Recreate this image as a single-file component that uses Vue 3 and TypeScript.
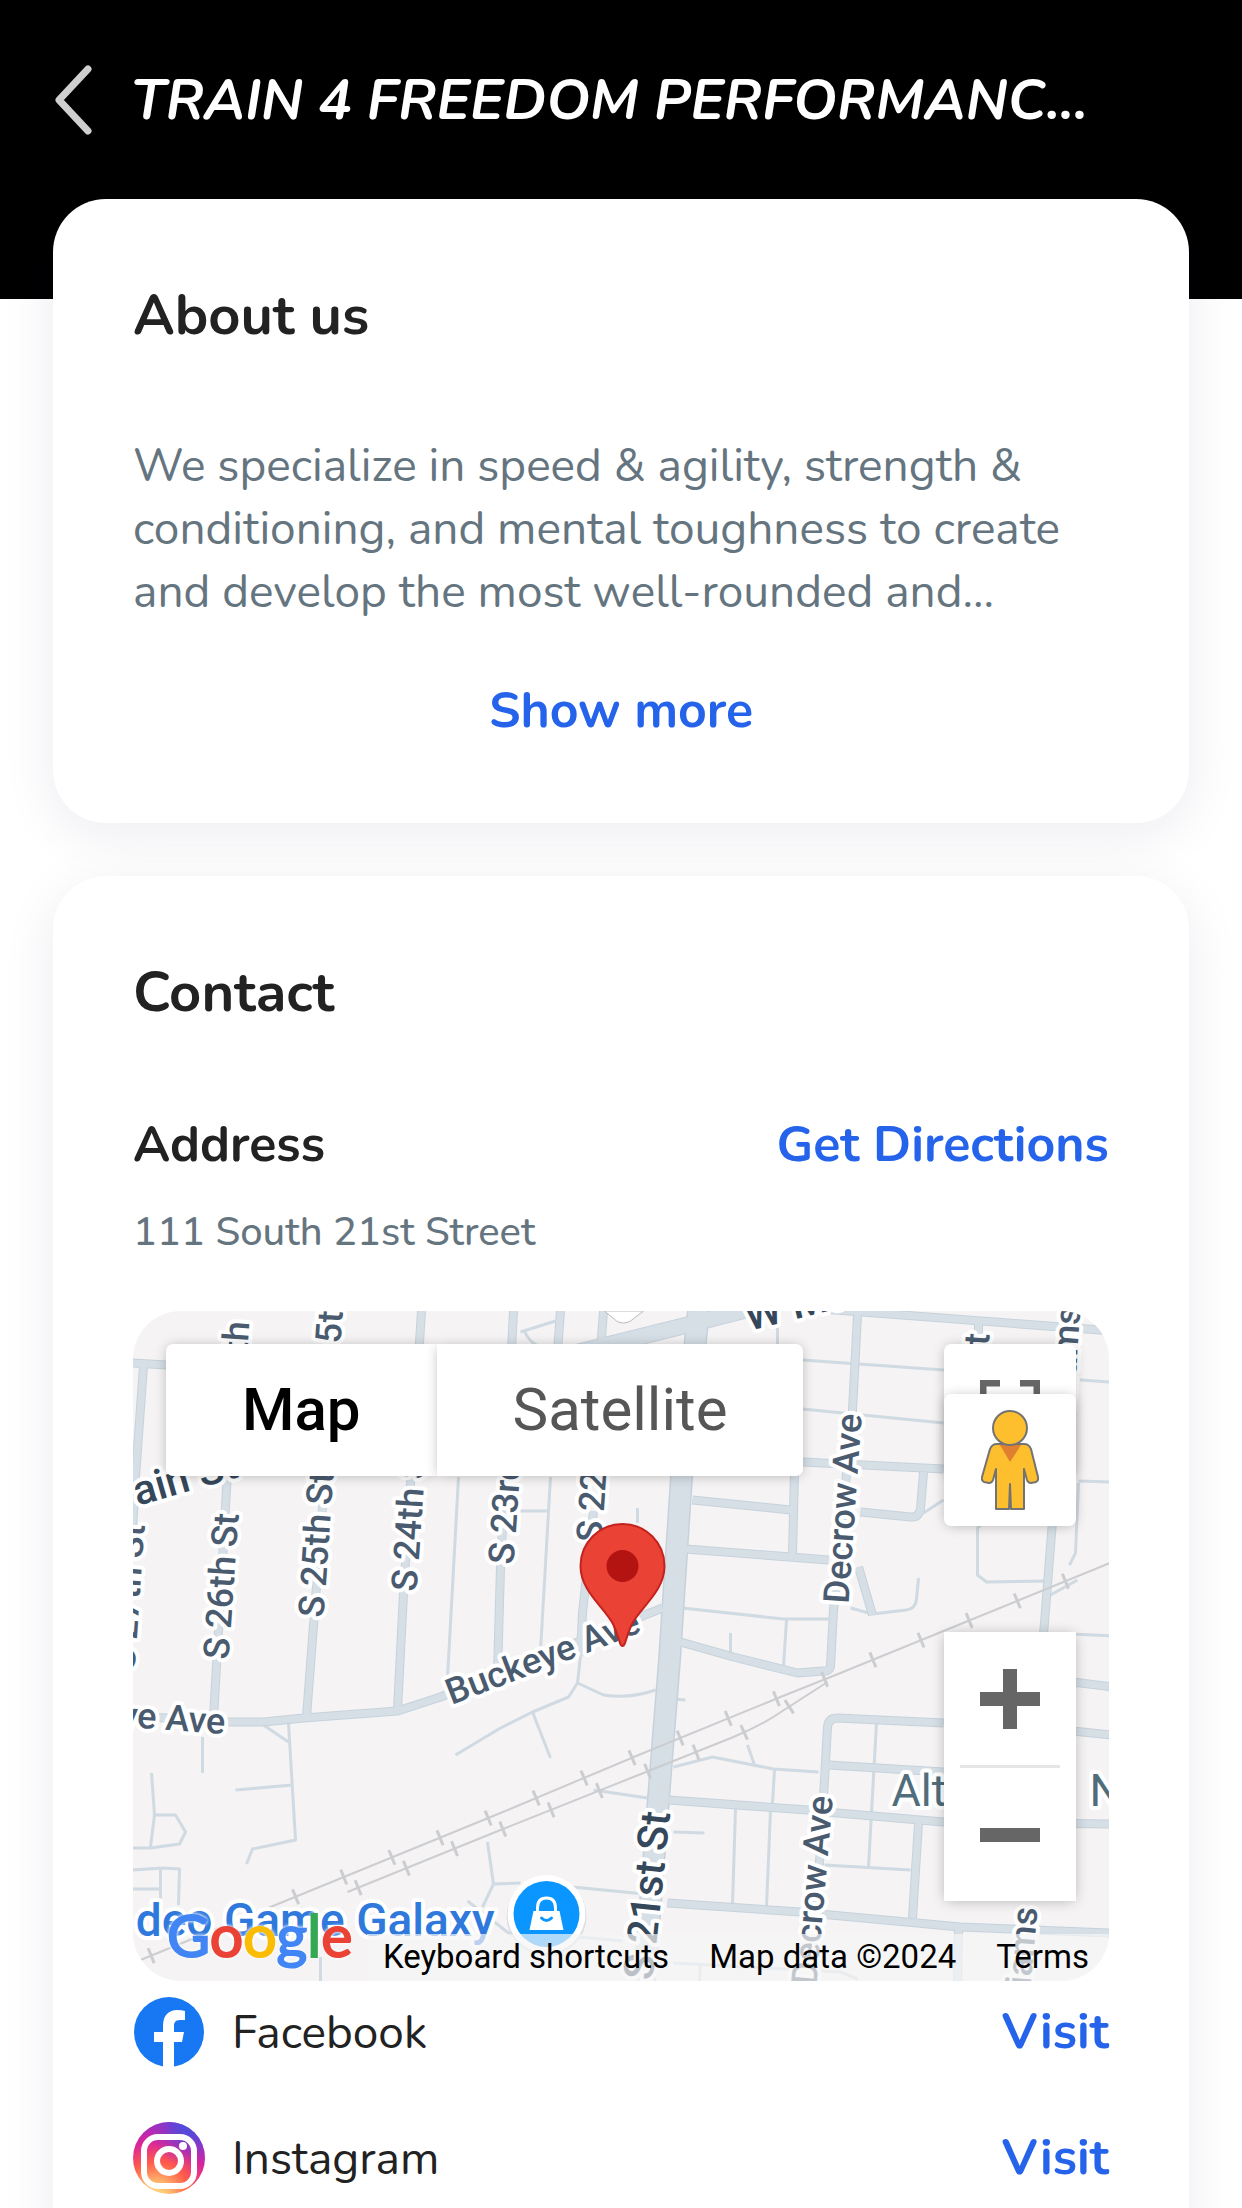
<script setup lang="ts">
interface Label {
  text: string
  x: number
  y: number
  rotate: number
  kind: 'street' | 'main' | 'area' | 'place'
  anchor?: 'start' | 'end'
}

const title = 'TRAIN 4 FREEDOM PERFORMANC...'

const wideRoads: string[] = [
  'M0 52L34 54', 'M11 55L3 166L0 220', 'M99 90L81 407', 'M203 0L192 170L174 406',
  'M289 0L271 282L265 399', 'M381 0L368 256L365 362', 'M428 0L425 40',
  'M471 0L468 40', 'M461 200L450 302L448 345', 'M0 405L98 411L131 411L171 407L265 400L308 386L515 303L530 297',
  'M536 489L675 499L705 502L811 511L978 513', 'M535 592L668 601L698 604L828 616L978 622',
  'M670 151L811 158', 'M690 -2L968 19L980 21', 'M725 4L720 99L701 299L698 355Q697 361 690 360L665 362L601 346L548 331',
  'M560 189L658 199', 'M662 160L660 244', 'M553 238L696 249', 'M791 161L788 198Q786 207 778 206L728 201',
  'M920 210L911 324', 'M726 256L740 304', 'M846 12L846 24', 'M940 371L980 376', 'M940 420L980 424',
  'M811 412L705 407Q696 407 695 416L691 486L684 600', 'M696 454L811 461', 'M786 512L780 607', 'M826 619L825 672',
]

const thinRoads: string[] = [
  'M326 166L316 349L315 366', 'M418 166L408 340', 'M388 200L415 200', 'M388 21L423 10', 'M392 20Q396 30 404 34',
  'M448 345L445 372L436 386L400 401L368 417L323 444', 'M400 401L418 447', 'M445 372L471 384Q498 388 523 379',
  'M505 197L505 212', 'M131 414L156 431', 'M156 412L163 529L120 538L114 553', 'M103 479L160 474', 'M70 426L70 462',
  'M19 462L22 504L18 536', 'M22 504L43 504L53 521L47 533L18 537L0 537', 'M0 559L30 557L47 558L46 594', 'M28 557L28 589',
  'M0 578L28 578', 'M355 531L361 573L388 572M440 576L512 583', 'M361 573L350 596M335 590L380 625', 'M461 479L515 487',
  'M541 456L580 446L641 458L686 461', 'M615 434L622 454', 'M642 459L640 492', 'M603 497L600 594', 'M638 499L634 596',
  'M541 521L572 522', 'M541 388L553 389', 'M670 49L811 59L978 71', 'M670 98L811 112', 'M645 15L645 34', 'M946 170L978 171',
  'M550 297L651 308L696 308', 'M654 309L651 356', 'M598 322L598 344', 'M791 202L811 189', 'M853 210L845 217L845 264L854 271L915 270',
  'M946 172L943 242L937 254', 'M718 297L740 303L774 299Q783 298 784 288L786 267', 'M918 284L945 269', 'M940 323L980 325',
  'M744 412L736 556', 'M692 554L778 559', 'M446 626L490 630M541 652L708 661L725 668', 'M188 646L188 670M568 655L567 670',
]

const rails: string[] = [
  'M8 649L138 596L368 502L511 442L648 386L708 362L980 251',
  'M215 581L368 519L511 462L601 426Q630 414 650 400L695 371',
]

const labels: Label[] = [
  { text: 'S 26th St', x: 96, y: 349, rotate: -86, kind: 'street' },
  { text: 'S 26th', x: 117, y: 11, rotate: -86, kind: 'street', anchor: 'end' },
  { text: 'S 25th St', x: 191, y: 307, rotate: -86, kind: 'street' },
  { text: '5th', x: 208, y: 33, rotate: -86, kind: 'street' },
  { text: 'S 24th St', x: 284, y: 281, rotate: -86, kind: 'street' },
  { text: 'S 23rd St', x: 381, y: 254, rotate: -86, kind: 'street' },
  { text: 'S 22nd St', x: 469, y: 232, rotate: -86, kind: 'street' },
  { text: 'S 27th St', x: 2, y: 360, rotate: -86, kind: 'street' },
  { text: 'Decrow Ave', x: 716, y: 293, rotate: -86, kind: 'street' },
  { text: 'Decrow Ave', x: 684, y: 675, rotate: -85, kind: 'street' },
  { text: 'Buckeye Ave', x: 319, y: 394, rotate: -21, kind: 'street' },
  { text: 'eye Ave', x: 92, y: 423, rotate: 4, kind: 'street', anchor: 'end' },
  { text: 'St', x: 857, y: 23, rotate: -86, kind: 'street', anchor: 'end' },
  { text: 'Williams', x: 948, y: -4, rotate: -86, kind: 'street', anchor: 'end' },
  { text: 'Williams', x: 905, y: 597, rotate: -85, kind: 'street', anchor: 'end' },
  { text: 'ain St', x: 5, y: 195, rotate: -16, kind: 'main' },
  { text: 'W Main St', x: 616, y: 20, rotate: -14, kind: 'main' },
  { text: 'S 21st St', x: 520, y: 670, rotate: -84, kind: 'main' },
  { text: 'Alt', x: 759, y: 495, rotate: 0, kind: 'area' },
  { text: 'N', x: 957, y: 495, rotate: 0, kind: 'area' },
  { text: 'deo Game Galaxy', x: 362, y: 625, rotate: 0, kind: 'place', anchor: 'end' },
]

const logo = [
  { letter: 'G', color: '#4285f4' },
  { letter: 'o', color: '#ea4335' },
  { letter: 'o', color: '#fbbc04' },
  { letter: 'g', color: '#4285f4' },
  { letter: 'l', color: '#34a853' },
  { letter: 'e', color: '#ea4335' },
]
</script>

<template>
  <div class="page">
    <header class="topbar">
      <button class="back" type="button" aria-label="Back">
        <svg viewBox="0 0 40 72" width="40" height="72" fill="none">
          <path d="M35 4L6 35L35 66" stroke="#cfcfcf" stroke-width="7" stroke-linecap="round" stroke-linejoin="round" />
        </svg>
      </button>
      <h1>{{ title }}</h1>
    </header>

    <main class="cards">
      <section class="card">
        <h2>About us</h2>
        <p class="about">
          We specialize in speed &amp; agility, strength &amp;<br />conditioning, and mental toughness to create<br />and
          develop the most well-rounded and...
        </p>
        <button class="action more" type="button">Show more</button>
      </section>

      <section class="card">
        <h2>Contact</h2>
        <div class="address-head">
          <h3>Address</h3>
          <a class="action" href="#directions">Get Directions</a>
        </div>
        <p class="street">111 South 21st Street</p>

        <div class="map">
          <svg class="tiles" viewBox="0 0 977 670" preserveAspectRatio="xMidYMid slice" aria-hidden="true">
            <rect width="977" height="670" fill="#f5f3f4" />
            <g fill="none" stroke-linejoin="round">
              <path v-for="d in thinRoads" :key="d" :d="d" stroke="#d0dae2" stroke-width="3" />
              <g stroke="#c6d2db" stroke-width="9">
                <path v-for="d in wideRoads" :key="d" :d="d" />
                <path d="M430 45L555 14L640 -8" stroke-width="17" />
                <path d="M566 0L549 166L537 349L525 500L512 670" stroke-width="23" />
              </g>
              <g stroke="#d6dfe6" stroke-width="7">
                <path v-for="d in wideRoads" :key="d" :d="d" />
                <path d="M430 45L555 14L640 -8" stroke-width="15" />
                <path d="M566 0L549 166L537 349L525 500L512 670" stroke-width="20" />
              </g>
              <g v-for="d in rails" :key="d" stroke="#cccdd0">
                <path :d="d" stroke-width="2" />
                <path :d="d" stroke-width="16" stroke-dasharray="3 49" stroke-dashoffset="-10" />
              </g>
            </g>
            <text
              v-for="(l, i) in labels"
              :key="i"
              :class="['label', l.kind]"
              :text-anchor="l.anchor ?? 'start'"
              :transform="`translate(${l.x} ${l.y}) rotate(${l.rotate})`"
            >{{ l.text }}</text>
            <circle cx="414" cy="605" r="40" fill="#c9d0d6" opacity=".6" />
            <circle cx="414" cy="603" r="39" fill="#fff" />
            <circle cx="414" cy="603" r="33" fill="#0b96ff" />
            <path d="M401 600h26l4 19h-34z" fill="#fff" />
            <path d="M405 601v-4q0-10 9-10t9 10v4" fill="none" stroke="#fff" stroke-width="3" />
            <path d="M409 607q5 5 10 0" fill="none" stroke="#0b96ff" stroke-width="3" stroke-linecap="round" />
            <path d="M472 0l12 10q7 4 14 0l13-10z" fill="#fff" stroke="#bbb" stroke-width="1" />
            <path
              d="M490 335C487 335 487 327 481 314C473 297 448 281 448 255A42 42 0 0 1 532 255C532 281 507 297 499 314C493 327 493 335 490 335Z"
              fill="#ea4335" stroke="#c5221f" stroke-width="2"
            />
            <circle cx="490" cy="255" r="16" fill="#b31412" />
          </svg>

          <div class="map-type">
            <button class="selected" type="button">Map</button>
            <button type="button">Satellite</button>
          </div>

          <button class="control fullscreen" type="button" aria-label="Toggle fullscreen view">
            <svg viewBox="0 0 60 60" width="60" height="60" fill="none" stroke="#666" stroke-width="7">
              <path d="M3 20V3H20M40 3H57V20M57 40V57H40M20 57H3V40" />
            </svg>
          </button>
          <button class="control pegman" type="button" aria-label="Street View">
            <svg viewBox="0 0 58 102" width="58" height="102" stroke="#737373" stroke-width="2" stroke-linejoin="round">
              <path d="M16 35H43Q48 35 50 40L57 68Q58 71 55 73L50 74Q47 74 46 71L43 60V100H30L29 75L28 100H15V60L12 71Q11 74 8 74L3 73Q0 71 1 68L9 40Q11 35 16 35Z" fill="#fdbf2d" />
              <path d="M19 36H40L29 53Z" fill="#e07f2f" stroke="none" />
              <circle cx="29" cy="19" r="17" fill="#fdbf2d" />
            </svg>
          </button>
          <div class="zoom">
            <button type="button" aria-label="Zoom in">
              <svg viewBox="0 0 60 60" width="60" height="60"><path d="M23 0h14v23h23v14H37v23H23V37H0V23h23z" fill="#666" /></svg>
            </button>
            <hr />
            <button type="button" aria-label="Zoom out">
              <svg viewBox="0 0 60 60" width="60" height="60"><path d="M0 23h60v14H0z" fill="#666" /></svg>
            </button>
          </div>

          <div class="attribution">
            <a href="#shortcuts">Keyboard shortcuts</a>
            <span>Map data ©2024</span>
            <a href="#terms">Terms</a>
          </div>
          <a class="logo" href="#google" aria-label="Google"><span v-for="(g, i) in logo" :key="i" :style="{ color: g.color }">{{ g.letter }}</span></a>
        </div>

        <ul class="links">
          <li>
            <svg viewBox="0 0 72 72" width="72" height="72" aria-hidden="true">
              <circle cx="36" cy="36" r="35" fill="#1877f2" />
              <path d="M30 72V46H21V36H30V30C30 19 36 14 44 14Q49 14 52 15V24H47C42 24 41 27 41 30V36H51L49 46H41V72Z" fill="#fff" />
            </svg>
            <span>Facebook</span>
            <a class="action" href="#facebook">Visit</a>
          </li>
          <li>
            <svg viewBox="0 0 72 72" width="72" height="72" aria-hidden="true">
              <defs>
                <radialGradient id="ig-warm" cx="32%" cy="104%" r="100%">
                  <stop offset="0" stop-color="#ffdd83" />
                  <stop offset=".18" stop-color="#ffc070" />
                  <stop offset=".48" stop-color="#ff5c4a" />
                  <stop offset=".76" stop-color="#dc2598" />
                  <stop offset="1" stop-color="#a22dc0" />
                </radialGradient>
                <radialGradient id="ig-cool" cx="80%" cy="0%" r="62%">
                  <stop offset="0" stop-color="#4255e0" />
                  <stop offset=".4" stop-color="#5a46d8" stop-opacity=".85" />
                  <stop offset="1" stop-color="#a22dc0" stop-opacity="0" />
                </radialGradient>
              </defs>
              <circle cx="36" cy="36" r="36" fill="url(#ig-warm)" />
              <circle cx="36" cy="36" r="36" fill="url(#ig-cool)" />
              <g fill="none" stroke="#fff" stroke-width="6">
                <rect x="11" y="15" width="50" height="49" rx="14" />
                <circle cx="36" cy="39" r="12" />
              </g>
              <circle cx="50" cy="24" r="4" fill="#fff" />
            </svg>
            <span>Instagram</span>
            <a class="action" href="#instagram">Visit</a>
          </li>
        </ul>
      </section>
    </main>
  </div>
</template>

<style>
body {
  margin: 0;
  background: #fff;
}
</style>

<style scoped>
.page {
  min-height: 100vh;
  box-sizing: border-box;
  color: #222;
  font-family: Nunito, Lato, sans-serif;
  font-size: 46px;
}

h1,
h2,
h3,
p,
ul {
  margin: 0;
  padding: 0;
}

button {
  border: 0;
  padding: 0;
  background: none;
  font: inherit;
  cursor: pointer;
}

a {
  color: inherit;
  text-decoration: none;
}

svg {
  display: block;
}

.topbar {
  display: flex;
  align-items: center;
  gap: 38px;
  padding: 0 53px 97px;
  height: 202px;
  background: #000;
  color: #fff;
}

.topbar h1 {
  font-size: 56px;
  line-height: 76px;
  font-weight: 700;
  font-style: italic;
  white-space: nowrap;
}

.cards {
  display: flex;
  flex-direction: column;
  gap: 53px;
  margin: -100px 53px 0;
}

.card {
  padding: 79px 80px 78px;
  border-radius: 53px;
  background: #fff;
  box-shadow: 0 12px 54px rgba(20, 20, 90, 0.08);
}

h2 {
  margin-bottom: 80px;
  font-size: 56px;
  line-height: 76px;
  font-weight: 700;
}

h3 {
  font-size: 50px;
  line-height: 68px;
  font-weight: 700;
}

.about {
  margin-bottom: 54px;
  color: #65757f;
  line-height: 63px;
}

.action {
  color: #2563eb;
  font-size: 50px;
  line-height: 68px;
  font-weight: 700;
}

.more {
  display: block;
  margin: 0 auto;
}

.address-head {
  display: flex;
  justify-content: space-between;
}

.street {
  margin: 26px 0 52px;
  color: #65757f;
  font-size: 40px;
  line-height: 54px;
  font-weight: 500;
}

.map {
  position: relative;
  height: 670px;
  overflow: hidden;
  border-radius: 48px;
  font-family: Roboto, sans-serif;
}

.tiles {
  width: 100%;
  height: 100%;
}

.label {
  font-size: 36px;
  font-weight: 500;
  fill: #4a5b70;
  stroke: #fff;
  stroke-width: 8px;
  stroke-linejoin: round;
  paint-order: stroke;
}

.label.main {
  font-size: 42px;
  fill: #35475a;
}

.label.area {
  font-size: 45px;
  font-weight: 400;
  fill: #4f6d7b;
}

.label.place {
  font-size: 46px;
  fill: #2f78dc;
}

.map-type {
  position: absolute;
  top: 33px;
  left: 33px;
  display: flex;
  height: 132px;
}

.map-type button,
.control,
.zoom {
  background: #fff;
  box-shadow: 0 1px 13px -2px rgba(0, 0, 0, 0.3);
}

.map-type button {
  padding: 0 76px;
  color: #565656;
  font-size: 60px;
  line-height: 130px;
}

.map-type .selected {
  border-radius: 7px 0 0 7px;
  color: #000;
  font-weight: 500;
}

.map-type button:last-child {
  border-radius: 0 7px 7px 0;
}

.control {
  position: absolute;
  right: 33px;
  display: grid;
  place-items: center;
  width: 132px;
  height: 132px;
  border-radius: 7px;
}

.fullscreen {
  top: 33px;
}

.pegman {
  top: 83px;
}

.zoom {
  position: absolute;
  right: 33px;
  bottom: 80px;
  display: flex;
  flex-direction: column;
  align-items: center;
  width: 132px;
}

.zoom button {
  display: grid;
  place-items: center;
  width: 132px;
  height: 133px;
}

.zoom hr {
  width: 100px;
  height: 3px;
  margin: 0;
  border: 0;
  background: #e6e6e6;
}

.attribution {
  position: absolute;
  right: 0;
  bottom: 0;
  display: flex;
  gap: 40px;
  padding: 0 20px 0 16px;
  height: 47px;
  background: rgba(245, 245, 245, 0.7);
  color: #000;
  font-size: 33px;
  line-height: 46px;
}

.logo {
  position: absolute;
  bottom: 6px;
  left: 34px;
  font-family: Lato, sans-serif;
  font-size: 59px;
  line-height: 80px;
  -webkit-text-stroke: 2px currentColor;
  text-shadow: 0 0 4px #fff, 0 0 4px #fff, 0 0 4px #fff;
}

.links {
  display: flex;
  flex-direction: column;
  gap: 24px;
  list-style: none;
}

.links li {
  display: flex;
  align-items: center;
  gap: 27px;
  height: 102px;
}

.links .action {
  margin-left: auto;
}
</style>
